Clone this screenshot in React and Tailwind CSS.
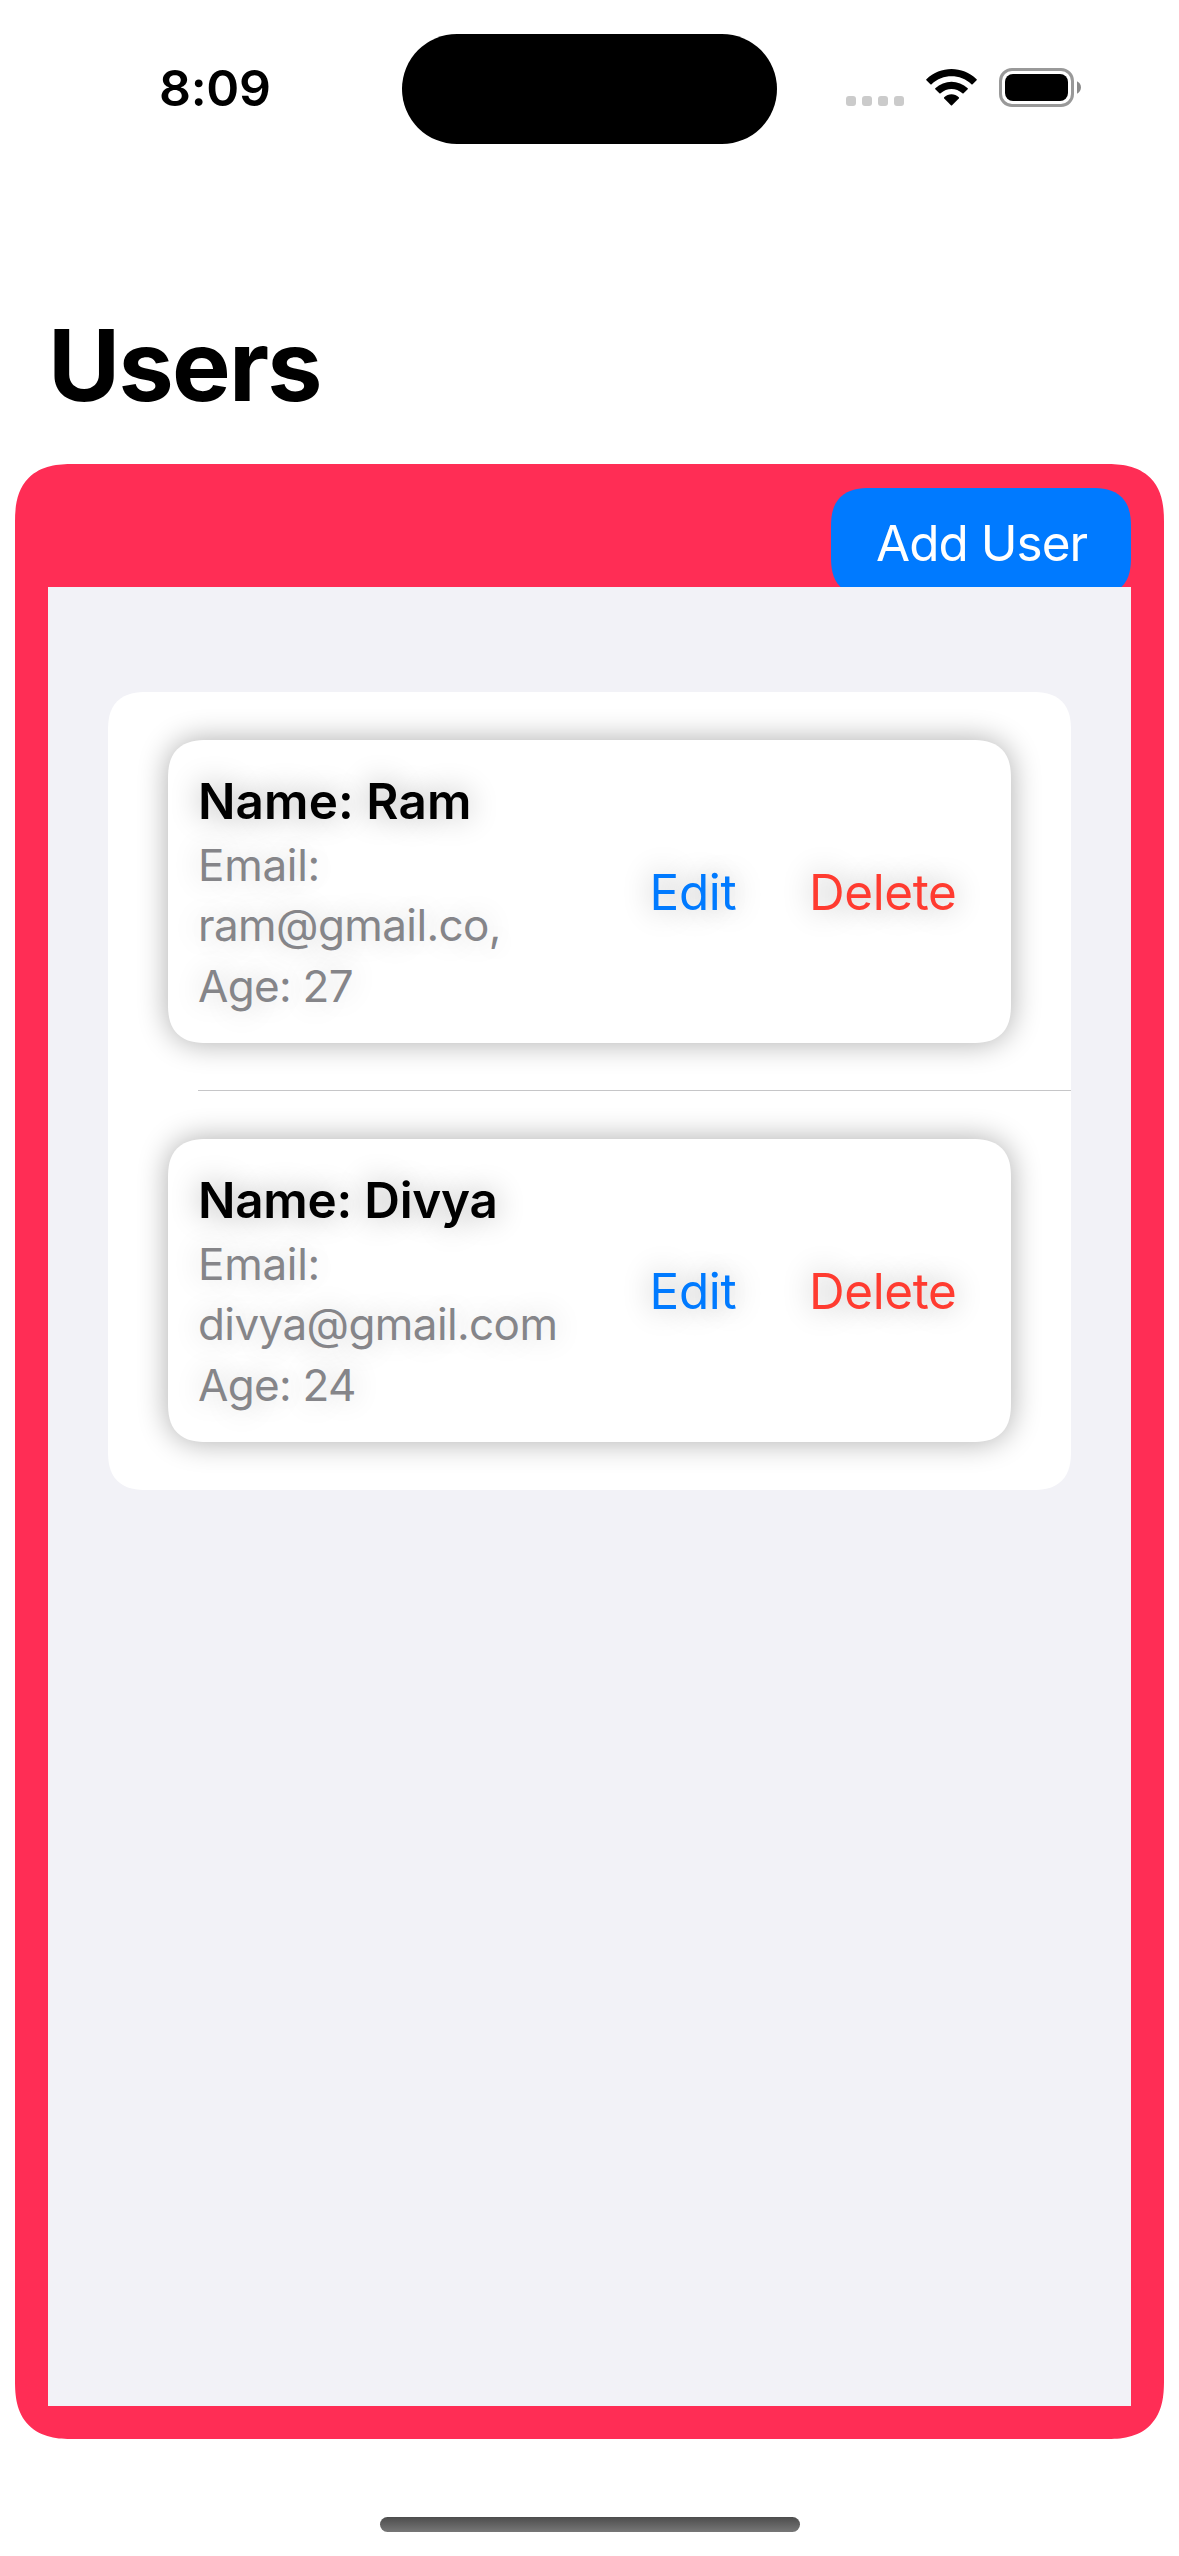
import React from "react";

const users = [
  { name: "Ram", email: "ram@gmail.co,", age: 27, nameTracking: "tracking-[0.1px]", emailTracking: "tracking-[-0.6px]" },
  { name: "Divya", email: "divya@gmail.com", age: 24, nameTracking: "tracking-[-0.25px]", emailTracking: "tracking-[-0.6px]" },
];

function StatusBar() {
  return (
    <header className="flex h-[144px] shrink-0 pt-[34px]">
      <div className="w-[402px] pl-[159px] pt-[24px] text-[50px] leading-[60px] font-semibold tracking-[-0.31px]">8:09</div>
      <div className="h-[110px] w-[375px] rounded-full bg-black" />
      <div className="flex items-start pl-[69px] pt-[34px]">
        <div className="flex gap-[6px] pt-[28px]">
          {[0, 1, 2, 3].map((i) => (
            <span key={i} className="size-[10px] rounded-[3px] bg-[#cbcbcb]" />
          ))}
        </div>
        <svg className="ml-[22px] mt-px h-[37px] w-[51px]" viewBox="0 0 51 37">
          <path d="M0.4 10.2 C14.5 -3.4 36.5 -3.4 50.6 10.2 Q51.1 10.8 50.6 11.3 L46.6 15.2 Q46 15.7 45.4 15.2 C34.2 4.7 16.8 4.7 5.6 15.2 Q5 15.7 4.4 15.2 L0.4 11.3 Q-0.1 10.8 0.4 10.2Z" />
          <path d="M9.3 19.2 C18.4 10.5 32.6 10.5 41.7 19.2 Q42.2 19.8 41.7 20.3 L37.6 24.3 Q37 24.8 36.4 24.3 C30.1 18.6 20.9 18.6 14.6 24.3 Q14 24.8 13.4 24.3 L9.3 20.3 Q8.8 19.8 9.3 19.2Z" />
          <path d="M18.2 28.2 C22.3 24.2 28.7 24.2 32.8 28.2 Q33.3 28.8 32.8 29.4 L26.1 36.2 Q25.5 36.8 24.9 36.2 L18.2 29.4 Q17.7 28.8 18.2 28.2Z" />
        </svg>
        <div className="ml-[22px] h-[39px] w-[75px] rounded-[13px] border-3 border-[#999] p-[3px]">
          <div className="h-[27px] w-[63px] rounded-[8px] bg-black" />
        </div>
        <svg className="ml-[3px] mt-[13px] h-[13px] w-[4px]" viewBox="0 0 4 13">
          <path d="M0 0.3 C5.3 2.7 5.3 10.3 0 12.7Z" fill="#8a8a8a" />
        </svg>
      </div>
    </header>
  );
}

function UserCard({ user }) {
  return (
    <div className="flex h-[303px] rounded-[39px] bg-white px-[30px] shadow-[0_0_30px_rgba(0,0,0,0.33)] [corner-shape:superellipse(1.35)] [text-shadow:0_0_30px_rgba(0,0,0,0.33)]">
      <div className="w-[451.5px] pt-[30px] whitespace-nowrap">
        <h2 className={`text-[49.4px] leading-[62px] font-semibold ${user.nameTracking}`}>Name: {user.name}</h2>
        <div className="mt-[3px] text-[44px] leading-[60px] text-[#858589] [text-shadow:0_0_30px_rgba(0,0,0,0.2)]">
          <p className="tracking-[-0.3px]">Email:</p>
          <p className={user.emailTracking}>{user.email}</p>
          <p className="pt-px tracking-[-0.7px]">Age: {user.age}</p>
        </div>
      </div>
      <div className="flex items-center text-[49.4px] leading-[60px]">
        <button className="w-[159.5px] text-left tracking-[-0.3px] text-[#007aff] [text-shadow:inherit]">Edit</button>
        <button className="tracking-[-0.37px] text-[#ff3b30] [text-shadow:inherit]">Delete</button>
      </div>
    </div>
  );
}

export default function App() {
  return (
    <div className="flex h-[2556px] w-[1179px] flex-col overflow-hidden bg-white font-[Inter,sans-serif] text-black">
      <StatusBar />
      <h1 className="mt-[161px] shrink-0 pl-[48px] text-[98.6px] leading-[120px] font-bold tracking-[-1.74px]">Users</h1>
      <main className="mx-[15px] mt-[39px] flex h-[1975px] shrink-0 flex-col rounded-[58px] bg-[#ff2d55] px-[33px] pt-[24px] pb-[33px] [corner-shape:superellipse(1.35)]">
        <div className="flex h-[99px] shrink-0 items-start justify-end overflow-hidden">
          <button className="h-[108px] w-[300px] shrink-0 rounded-[39px] bg-[#007aff] pr-[41px] pb-[23px] pl-[45px] pt-[25px] text-left text-[49.4px] leading-[60px] tracking-[-0.94px] whitespace-nowrap text-white [corner-shape:superellipse(1.35)]">Add User</button>
        </div>
        <section className="flex-1 bg-[#f2f2f7] px-[60px] pt-[105px]">
          <ul className="overflow-hidden rounded-[39px] bg-white [corner-shape:superellipse(1.35)]">
            <li className="flex h-[399px] flex-col px-[60px] pt-[48px]">
              <UserCard user={users[0]} />
              <div className="-mr-[60px] mt-[47px] ml-[30px] h-px shrink-0 bg-[#c6c6c8]" />
            </li>
            <li className="h-[399px] px-[60px] pt-[48px]">
              <UserCard user={users[1]} />
            </li>
          </ul>
        </section>
      </main>
      <div className="mt-[78px] ml-[380px] h-[15px] w-[420px] shrink-0 rounded-full bg-linear-to-b from-[#4d4d4d] to-[#777]" />
    </div>
  );
}
